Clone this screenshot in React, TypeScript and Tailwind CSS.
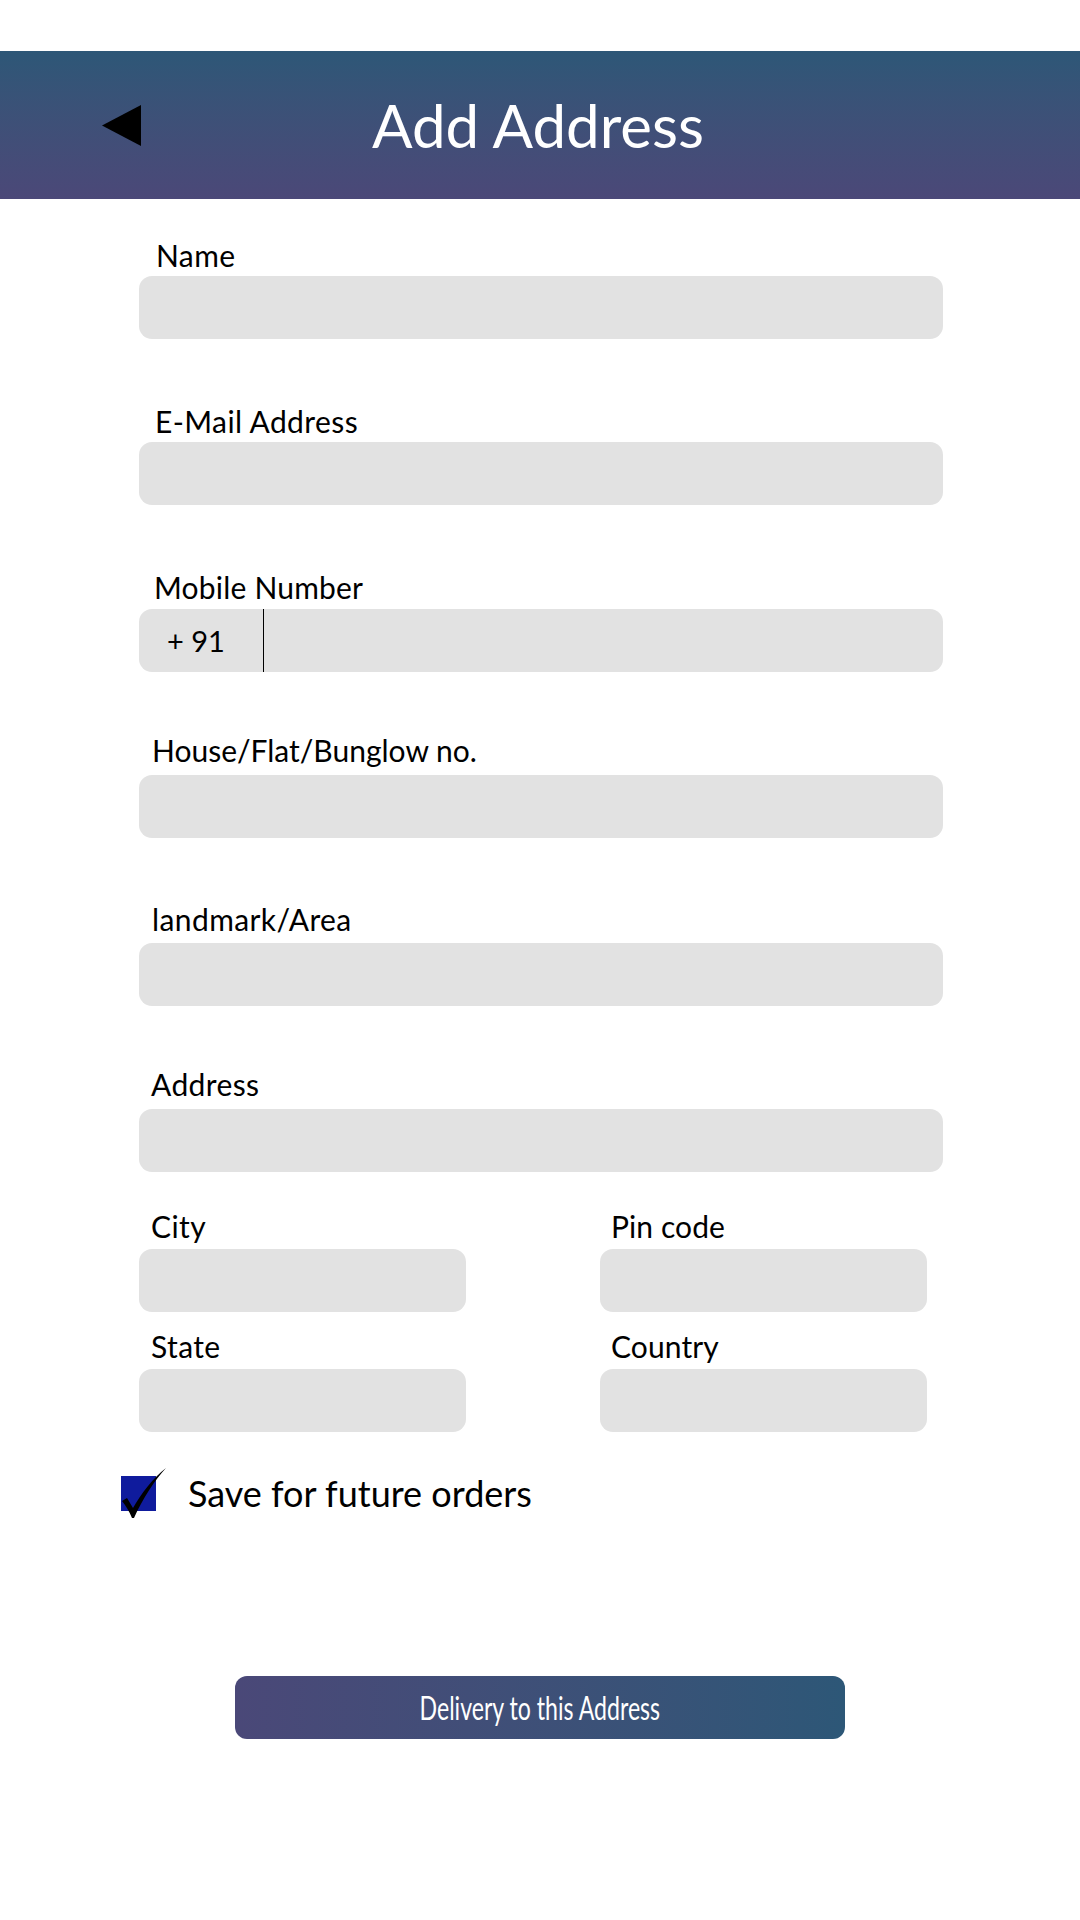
import { useState } from 'react';

const fields = [
  { label: 'Name', labelPad: 'pl-[17px] tracking-[0.4px]', top: 'mt-[42px]', gap: 'mb-[6px]' },
  { label: 'E-Mail Address', labelPad: 'pl-[16px] tracking-[0.4px]', top: 'mt-[68px]', gap: 'mb-[6px]' },
  { label: 'Mobile Number', labelPad: 'pl-[15px] tracking-[0.2px]', top: 'mt-[68px]', gap: 'mb-[7px]', phone: true },
  { label: 'House/Flat/Bunglow no.', labelPad: 'pl-[13px] tracking-normal', top: 'mt-[64px]', gap: 'mb-[10px]' },
  { label: 'landmark/Area', labelPad: 'pl-[13px] tracking-[0.4px]', top: 'mt-[67px]', gap: 'mb-[9px]' },
  { label: 'Address', labelPad: 'pl-[12px] tracking-[0.4px]', top: 'mt-[64px]', gap: 'mb-[10px]' },
];

const Field = ({ label, right }: { label: string; right?: boolean }) => (
  <div>
    <label
      className={`block text-[30px] leading-[29px] mb-[8px] text-black ${
        right ? 'pl-[11px] tracking-[0.1px]' : 'pl-[12px] tracking-[0.4px]'
      }`}
    >
      {label}
    </label>
    <div className="h-[63px] rounded-[13px] bg-[#e2e2e2]" />
  </div>
);

const App = () => {
  const [saved, setSaved] = useState(true);

  return (
    <div className="min-h-[1920px] bg-white pt-[51px]" style={{ fontFamily: 'Lato, "Open Sans", sans-serif' }}>
      <header className="h-[148px] grid grid-cols-[1fr_auto_1fr] items-center bg-gradient-to-b from-[#2d5777] to-[#4b4878]">
        <div className="pl-[102px]">
          <svg width="39" height="41" viewBox="0 0 39 41">
            <polygon points="0,20.5 39,0 39,41" fill="#000" />
          </svg>
        </div>
        <h1 className="text-[60px] leading-none text-white pr-[4px]">Add Address</h1>
        <div />
      </header>

      <form className="ml-[139px] w-[804px]">
        {fields.map((f) => (
          <div key={f.label} className={f.top}>
            <label className={`block text-[30px] leading-[29px] text-black ${f.labelPad} ${f.gap}`}>{f.label}</label>
            {f.phone ? (
              <div className="h-[63px] rounded-[13px] bg-[#e2e2e2] flex items-stretch">
                <span className="w-[124px] flex items-center pl-[28px] text-[29px] text-black">+ 91</span>
                <span className="w-px bg-black" />
              </div>
            ) : (
              <div className="h-[63px] rounded-[13px] bg-[#e2e2e2]" />
            )}
          </div>
        ))}

        <div className="grid grid-cols-[327px_327px] justify-between pr-[16px] mt-[40px] gap-y-[20px]">
          <Field label="City" />
          <Field label="Pin code" right />
          <Field label="State" />
          <Field label="Country" right />
        </div>
      </form>

      <div className="mt-[43px] ml-[121px] flex items-center gap-[32px] cursor-pointer" onClick={() => setSaved(!saved)}>
        <div className="relative w-[35px] h-[35px] bg-[#0f1b9d] shrink-0">
          {saved && (
            <svg className="absolute left-0 top-[-10px]" width="46" height="54" viewBox="0 0 46 54">
              <path
                d="M1 35 L6 32 C8 35 10 39 12 42 C20 28 32 12 45 2 C34 14 22 32 13 52 L11 52 C8 45 5 40 1 35 Z"
                fill="#000"
              />
            </svg>
          )}
        </div>
        <span className="text-[36px] leading-none text-black">Save for future orders</span>
      </div>

      <div className="mt-[165px] flex justify-center">
        <button className="w-[610px] h-[63px] rounded-[12px] bg-gradient-to-r from-[#4a4878] to-[#2d5777] text-white flex items-center justify-center">
          <span className="inline-block text-[33px] leading-none scale-x-[0.7]">Delivery to this Address</span>
        </button>
      </div>
    </div>
  );
};

export default App;
